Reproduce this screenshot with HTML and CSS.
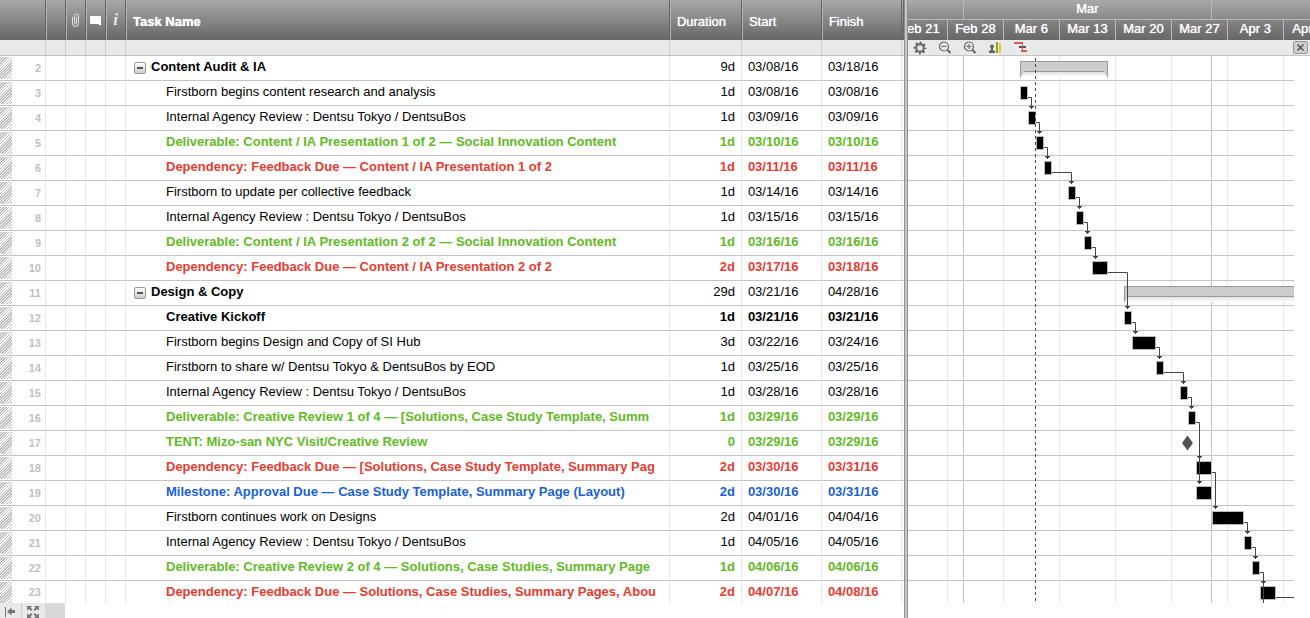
FILE: index.html
```
<!DOCTYPE html>
<html lang="en">
<head>
<meta charset="utf-8">
<title>Project schedule</title>
<link rel="stylesheet" href="styles.css">
</head>
<body>
<main class="app">
  <section class="sheet">
    <table class="tasks">
      <colgroup>
        <col class="c-num"><col class="c-icon"><col class="c-icon"><col class="c-icon"><col class="c-icon"><col><col class="c-dur"><col class="c-date"><col class="c-date"><col class="c-end">
      </colgroup>
      <thead>
        <tr class="head">
          <th></th><th></th>
          <th><svg class="hicon" width="19" height="20" viewBox="0 0 19 20" role="img" aria-label="Attachments"><path d="M6.500 7v6.500a3 3 0 0 0 6 0V6a2 2 0 0 0-4 0v7a1 1 0 0 0 2 0V7" fill="none" stroke="#e4e4e4" stroke-width="1"/></svg></th>
          <th><svg class="hicon" width="19" height="20" viewBox="0 0 19 20" role="img" aria-label="Comments"><path d="M5 6h9q1 0 1 1v8.500L11.500 14H5q-1 0-1-1V7q0-1 1-1z" fill="#fff"/></svg></th>
          <th class="info">i</th>
          <th class="name">Task Name</th><th>Duration</th><th>Start</th><th>Finish</th><th></th>
        </tr>
        <tr class="sub"><td></td><td></td><td></td><td></td><td></td><td></td><td></td><td></td><td></td><td></td></tr>
      </thead>
      <tbody>
        <tr class="group"><td class="num">2</td><td></td><td></td><td></td><td></td><td class="task"><button class="toggle" aria-label="Collapse"></button>Content Audit &amp; IA</td><td class="dur">9d</td><td>03/08/16</td><td>03/18/16</td><td></td></tr>
        <tr><td class="num">3</td><td></td><td></td><td></td><td></td><td class="task">Firstborn begins content research and analysis</td><td class="dur">1d</td><td>03/08/16</td><td>03/08/16</td><td></td></tr>
        <tr><td class="num">4</td><td></td><td></td><td></td><td></td><td class="task">Internal Agency Review : Dentsu Tokyo / DentsuBos</td><td class="dur">1d</td><td>03/09/16</td><td>03/09/16</td><td></td></tr>
        <tr class="green"><td class="num">5</td><td></td><td></td><td></td><td></td><td class="task">Deliverable: Content / IA Presentation 1 of 2 — Social Innovation Content</td><td class="dur">1d</td><td>03/10/16</td><td>03/10/16</td><td></td></tr>
        <tr class="red"><td class="num">6</td><td></td><td></td><td></td><td></td><td class="task">Dependency: Feedback Due — Content / IA Presentation 1 of 2</td><td class="dur">1d</td><td>03/11/16</td><td>03/11/16</td><td></td></tr>
        <tr><td class="num">7</td><td></td><td></td><td></td><td></td><td class="task">Firstborn to update per collective feedback</td><td class="dur">1d</td><td>03/14/16</td><td>03/14/16</td><td></td></tr>
        <tr><td class="num">8</td><td></td><td></td><td></td><td></td><td class="task">Internal Agency Review : Dentsu Tokyo / DentsuBos</td><td class="dur">1d</td><td>03/15/16</td><td>03/15/16</td><td></td></tr>
        <tr class="green"><td class="num">9</td><td></td><td></td><td></td><td></td><td class="task">Deliverable: Content / IA Presentation 2 of 2 — Social Innovation Content</td><td class="dur">1d</td><td>03/16/16</td><td>03/16/16</td><td></td></tr>
        <tr class="red"><td class="num">10</td><td></td><td></td><td></td><td></td><td class="task">Dependency: Feedback Due — Content / IA Presentation 2 of 2</td><td class="dur">2d</td><td>03/17/16</td><td>03/18/16</td><td></td></tr>
        <tr class="group"><td class="num">11</td><td></td><td></td><td></td><td></td><td class="task"><button class="toggle" aria-label="Collapse"></button>Design &amp; Copy</td><td class="dur">29d</td><td>03/21/16</td><td>04/28/16</td><td></td></tr>
        <tr class="strong"><td class="num">12</td><td></td><td></td><td></td><td></td><td class="task">Creative Kickoff</td><td class="dur">1d</td><td>03/21/16</td><td>03/21/16</td><td></td></tr>
        <tr><td class="num">13</td><td></td><td></td><td></td><td></td><td class="task">Firstborn begins Design and Copy of SI Hub</td><td class="dur">3d</td><td>03/22/16</td><td>03/24/16</td><td></td></tr>
        <tr><td class="num">14</td><td></td><td></td><td></td><td></td><td class="task">Firstborn to share w/ Dentsu Tokyo &amp; DentsuBos by EOD</td><td class="dur">1d</td><td>03/25/16</td><td>03/25/16</td><td></td></tr>
        <tr><td class="num">15</td><td></td><td></td><td></td><td></td><td class="task">Internal Agency Review : Dentsu Tokyo / DentsuBos</td><td class="dur">1d</td><td>03/28/16</td><td>03/28/16</td><td></td></tr>
        <tr class="green"><td class="num">16</td><td></td><td></td><td></td><td></td><td class="task"><div class="clip">Deliverable: Creative Review 1 of 4 — [Solutions, Case Study Template, Summ</div></td><td class="dur">1d</td><td>03/29/16</td><td>03/29/16</td><td></td></tr>
        <tr class="green"><td class="num">17</td><td></td><td></td><td></td><td></td><td class="task">TENT: Mizo-san NYC Visit/Creative Review</td><td class="dur">0</td><td>03/29/16</td><td>03/29/16</td><td></td></tr>
        <tr class="red"><td class="num">18</td><td></td><td></td><td></td><td></td><td class="task"><div class="clip">Dependency: Feedback Due — [Solutions, Case Study Template, Summary Pag</div></td><td class="dur">2d</td><td>03/30/16</td><td>03/31/16</td><td></td></tr>
        <tr class="blue"><td class="num">19</td><td></td><td></td><td></td><td></td><td class="task">Milestone: Approval Due — Case Study Template, Summary Page (Layout)</td><td class="dur">2d</td><td>03/30/16</td><td>03/31/16</td><td></td></tr>
        <tr><td class="num">20</td><td></td><td></td><td></td><td></td><td class="task">Firstborn continues work on Designs</td><td class="dur">2d</td><td>04/01/16</td><td>04/04/16</td><td></td></tr>
        <tr><td class="num">21</td><td></td><td></td><td></td><td></td><td class="task">Internal Agency Review : Dentsu Tokyo / DentsuBos</td><td class="dur">1d</td><td>04/05/16</td><td>04/05/16</td><td></td></tr>
        <tr class="green"><td class="num">22</td><td></td><td></td><td></td><td></td><td class="task"><div class="clip">Deliverable: Creative Review 2 of 4 — Solutions, Case Studies, Summary Page</div></td><td class="dur">1d</td><td>04/06/16</td><td>04/06/16</td><td></td></tr>
        <tr class="red last"><td class="num">23</td><td></td><td></td><td></td><td></td><td class="task"><div class="clip">Dependency: Feedback Due — Solutions, Case Studies, Summary Pages, Abou</div></td><td class="dur">2d</td><td>04/07/16</td><td>04/08/16</td><td></td></tr>
      </tbody>
    </table>
    <footer class="foot">
      <button aria-label="Collapse left"><svg width="20" height="15"><path d="M5.500 4v10" stroke="#777" stroke-width="1"/><path d="M7 8.500l4.500-4V7H15v3h-3.500v2.500z" fill="#777"/></svg></button>
      <button aria-label="Full screen"><svg width="24" height="15"><g fill="#777"><path d="M5 3h5L8.500 4.500 10.500 6.500 9 8 7 6 5 7.500z"/><path d="M17 3h-5l1.500 1.500-2 2L13 8l2-2 2 1.500z"/><path d="M5 15h5l-1.500-1.500 2-2L9 10l-2 2-2-1.500z"/><path d="M17 15h-5l1.500-1.500-2-2L13 10l2 2 2-1.500z"/></g></svg></button>
      <span class="thumb"></span>
    </footer>
  </section>
  <div class="divider"></div>
  <section class="gantt">
    <div class="months"><span></span><span class="full">Mar</span><span></span></div>
    <div class="weeks"><span>Feb 21</span><span>Feb 28</span><span>Mar 6</span><span>Mar 13</span><span>Mar 20</span><span>Mar 27</span><span>Apr 3</span><span>Apr 10</span></div>
    <div class="tools">
      <button aria-label="Settings"><svg width="15" height="15"><circle cx="7" cy="7" r="3.800" fill="none" stroke="#666" stroke-width="2"/><circle cx="7" cy="7" r="5.300" fill="none" stroke="#666" stroke-width="2.200" stroke-dasharray="2.080 2.080" stroke-dashoffset="1.040"/></svg></button>
      <button aria-label="Zoom out"><svg width="15" height="15" fill="none" stroke="#666"><circle cx="6" cy="5.500" r="4.500" stroke-width="1.200"/><path d="M3.500 5.500h5"/><path d="M9 8.500l3.500 3.500" stroke-width="2.200"/></svg></button>
      <button aria-label="Zoom in"><svg width="15" height="15" fill="none" stroke="#666"><circle cx="6" cy="5.500" r="4.500" stroke-width="1.200"/><path d="M3.500 5.500h5M6 3v5"/><path d="M9 8.500l3.500 3.500" stroke-width="2.200"/></svg></button>
      <button aria-label="Resources"><svg width="15" height="15"><g fill="#666"><circle cx="4" cy="5.500" r="2"/><path d="M3 7h2v2l2 1v2H1v-2l2-1z"/></g><path d="M8 1h2v11H8z" fill="#7ab317"/><path d="M11 2h2v10h-2z" fill="#f8bd36"/></svg></button>
      <button aria-label="Critical path"><svg width="15" height="15"><path d="M6 6h7" stroke="#555" stroke-width="2"/><path d="M1 2h7" fill="none" stroke="#d9575b" stroke-width="2"/><path d="M9.500 1v9" stroke="#d9575b"/><path d="M7 2h3M8 10h6" stroke="#d9575b" stroke-width="2"/></svg></button>
      <button class="close" aria-label="Close"><svg width="13" height="11"><path d="M3.500 2.500l6 6m0-6l-6 6" stroke="#555" stroke-width="1.600"/></svg></button>
    </div>
    <div class="chart">
      <svg width="100%" height="100%" role="img" aria-label="Task timeline">
        <defs>
          <marker id="tip" markerUnits="userSpaceOnUse" markerWidth="5" markerHeight="3" refX="2.500" refY="3" orient="0"><path d="M0 0h5v1H4v1H3v1H2V2H1V1H0z" fill="#444"/></marker>
          <linearGradient id="fade" x1="0" y1="0" x2="0" y2="1"><stop offset="0" stop-color="#e2e2e2"/><stop offset="1" stop-color="#fff"/></linearGradient>
          <pattern id="rows" patternUnits="userSpaceOnUse" x="908" y="56" width="50" height="25"><rect y="24" width="50" height="1" fill="#c4c4c4"/></pattern>
          <pattern id="cols" patternUnits="userSpaceOnUse" x="947" y="56" width="56" height="50"><rect width="1" height="50" fill="#e6e6e6"/></pattern>
        </defs>
        <g transform="translate(-908 -56)">
          <rect x="908" y="56" width="3000" height="547" fill="url(#cols)"/>
          <rect x="908" y="56" width="3000" height="547" fill="url(#rows)"/>
          <path d="M963.500 56v547M1211.500 56v547" stroke="#c4c4c4"/>
          <rect x="1023" y="72" width="82" height="5" fill="url(#fade)"/><rect x="1127" y="297" width="3000" height="5" fill="url(#fade)"/>
          <g class="summary"><path d="M1020 61h88v17l-4-6h-80l-4 6z"/><path d="M4000 286H1124v17l4-6H4000z"/></g>
          <path class="edge" d="M1020.500 77V61.500h87V77M1024 71.500h80M1124.500 302v-15.500H4000M1128 296.500H4000"/>
          <g class="bars">
            <rect x="1020.500" y="86.500" width="7" height="13"/><rect x="1028.500" y="111.500" width="7" height="13"/><rect x="1036.500" y="136.500" width="7" height="13"/><rect x="1044.500" y="161.500" width="7" height="13"/><rect x="1068.500" y="186.500" width="7" height="13"/><rect x="1076.500" y="211.500" width="7" height="13"/><rect x="1084.500" y="236.500" width="7" height="13"/><rect x="1092.500" y="261.500" width="15" height="13"/>
            <rect x="1124.500" y="311.500" width="7" height="13"/><rect x="1132.500" y="336.500" width="23" height="13"/><rect x="1156.500" y="361.500" width="7" height="13"/><rect x="1180.500" y="386.500" width="7" height="13"/><rect x="1188.500" y="411.500" width="7" height="13"/>
            <rect x="1196.500" y="461.500" width="15" height="13"/><rect x="1196.500" y="486.500" width="15" height="13"/><rect x="1212.500" y="511.500" width="31" height="13"/><rect x="1244.500" y="536.500" width="7" height="13"/><rect x="1252.500" y="561.500" width="7" height="13"/><rect x="1260.500" y="586.500" width="15" height="13"/>
          </g>
          <path d="M1187.500 435.500l5.500 7.500-5.500 7.500-5.500-7.500z" fill="#555"/>
          <g class="links">
            <path d="M1028 97.500h3.500V109"/><path d="M1036 122.500h3.500V134"/><path d="M1044 147.500h3.500V159"/><path d="M1052 172.500h19.500V184"/><path d="M1076 197.500h3.500V209"/><path d="M1084 222.500h3.500V234"/><path d="M1092 247.500h3.500V259"/><path d="M1108 272.500h19.500V309"/>
            <path d="M1132 322.500h3.500V334"/><path d="M1156 347.500h3.500V359"/><path d="M1164 372.500h19.500V384"/><path d="M1188 397.500h3.500V409"/><path d="M1196 422.500h3.500V459"/><path d="M1199.500 459V484"/><path d="M1212 472.500h3.500V509"/><path d="M1244 522.500h3.500V534"/><path d="M1252 547.500h3.500V559"/><path d="M1260 572.500h3.500V584"/><path d="M1263.500 584v50"/><path d="M1276 597.500h3000"/>
          </g>
          <path d="M1035.500 58V603" stroke="#4a4a55" stroke-dasharray="3 3"/>
        </g>
      </svg>
    </div>
  </section>
</main>
</body>
</html>
```
FILE: styles.css
```
* { box-sizing: border-box; }
body { margin: 0; background: #fff; color: #000; font: 13px/16px "Liberation Sans", Arial, sans-serif; }
button { padding: 0; border: 0; background: none; display: block; }
button svg, .chart svg { display: block; }
.app { display: flex; min-height: 100vh; overflow: hidden; }

.sheet { flex: 0 0 69%; min-width: 0; }
.tasks { width: 100%; table-layout: fixed; border-collapse: separate; border-spacing: 0; }
.c-num { width: 46px; }
.c-icon { width: 20px; }
.c-dur { width: 72px; }
.c-date { width: 80px; }
.c-end { width: 2px; }
.head { background: linear-gradient(#a9a9a9, #666); }
.head th { height: 40px; padding: 3px 0 0 7px; border-right: 1px solid #666; box-shadow: inset 1px 0 #b0b0b0; color: #fff; font-weight: normal; text-align: left; text-shadow: 0 0 1px #fff; }
.head th:first-child, .head th:last-child { box-shadow: none; }
.head th:has(.hicon), .head .info { padding: 0; text-align: center; }
.head .name { font-weight: bold; }
.head .info { font: italic bold 17px/20px "Liberation Serif", serif; color: #e4e4e4; text-shadow: none; }
.hicon { display: block; }
.sub td { height: 16px; padding: 0; background: #e9e9e9; border-right: 1px solid #ccc; border-bottom: 1px solid #c4c4c4; }
tbody td { height: 25px; padding: 0 0 2px 6px; border-right: 1px solid #e6e6e6; border-bottom: 1px solid #c4c4c4; white-space: nowrap; overflow: hidden; }
tbody td:last-child, .sub td:last-child { border-right: 0; }
tbody .num { padding: 0 4px 0 0; text-align: right; color: #c0c0c0; font-size: 11px; font-weight: bold; background: repeating-linear-gradient(135deg, #bbb 0 1px, #fff 1px 2px) 0 1px / 12px 22px no-repeat; }
tbody .dur { padding: 0 6px 2px 0; text-align: right; }
tbody .task { padding-left: 40px; padding-right: 6px; }
.clip { overflow: hidden; }
tbody .group .task { padding-left: 8px; font-weight: bold; }
.strong, .green, .red, .blue { font-weight: bold; }
.green { color: #62b925; }
.red { color: #e63c32; }
.blue { color: #1a5fd8; }
tbody .last td { height: 22px; padding-bottom: 0; border-bottom: 0; }
.toggle { display: inline-block; vertical-align: -2px; width: 12px; height: 12px; margin-right: 5px; border: 1px solid #999; border-radius: 2px; background: linear-gradient(#555, #555) center / 6px 2px no-repeat, linear-gradient(#fff, #ccc); }
.foot { display: flex; height: 15px; width: 65px; background: #e9e9e9; }
.foot button { width: 24px; overflow: hidden; }
.foot button:first-child { width: 21px; }
.foot button + button { border-left: 1px solid #ccc; }
.thumb { flex: 1; background: #d8d8d8; }

.divider { flex: 0 0 4px; background: #c8c8c8; border: solid #8e8e8e; border-width: 0 1px; }

.gantt { flex: 1; min-width: 0; display: flex; flex-direction: column; overflow: hidden; }
.months, .weeks { display: flex; height: 20px; color: #fff; line-height: 17px; text-align: center; text-shadow: 0 0 1px #fff; }
.months { background: linear-gradient(#a9a9a9, #888); border-bottom: 1px solid #b8b8b8; }
.months span { flex: 0 0 56px; border-right: 1px solid #b8b8b8; }
.months .full { flex-basis: 248px; }
.months span:last-child { flex: 1; border: 0; }
.weeks { background: linear-gradient(#848484, #666); }
.weeks span { flex: 0 0 56px; border-right: 1px solid #b8b8b8; }
.weeks span:first-child { margin-left: -16px; }
.tools { display: flex; gap: 10px; height: 16px; padding: 1px 2px 0 5px; background: #e9e9e9; border-bottom: 1px solid #c4c4c4; }
.tools button { flex: 0 0 15px; height: 14px; overflow: hidden; }
.tools .close { margin-left: auto; height: 13px; border: 1px solid #999; border-radius: 2px; background: #ccc; }
.chart { height: 547px; margin-right: 16px; overflow: hidden; }
.summary path { fill: #ccc; }
.edge { fill: none; stroke: #999; }
.bars rect { fill: #000; stroke: #bbb; }
.links path { fill: none; stroke: #444; marker-end: url(#tip); }
```
